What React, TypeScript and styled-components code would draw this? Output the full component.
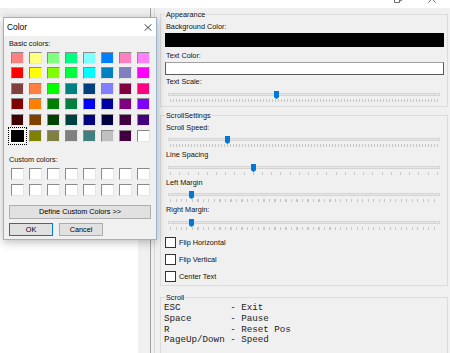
import React from "react";
import styled, { createGlobalStyle } from "styled-components";

const GlobalStyle = createGlobalStyle`
  html, body {
    margin: 0;
    padding: 0;
  }
  body {
    width: 450px;
    height: 353px;
    overflow: hidden;
    background: #f0f0f0;
    font-family: "Liberation Sans", Arial, sans-serif;
    color: #000;
  }
`;

const Screen = styled.div`
  position: relative;
  width: 450px;
  height: 353px;
  overflow: hidden;
  display: flex;
  flex-direction: column;
  background: #f0f0f0;
`;

const TopBar = styled.div`
  height: 8px;
  flex: none;
  background: #fff;
  display: flex;
  justify-content: flex-end;
  align-items: flex-start;
  gap: 26px;
  padding-right: 14px;
`;

const Main = styled.div`
  flex: 1;
  display: flex;
  min-height: 0;
`;

const LeftPane = styled.div`
  width: 138px;
  margin-top: 9px;
  background: #fff;
`;

const ScrollStrip = styled.div`
  width: 12px;
  background: #f0f0f0;
`;

const Splitter = styled.div`
  width: 3px;
  border-left: 1px solid #a0a0a0;
  border-right: 1px solid #dadada;
`;

const RightPane = styled.div`
  flex: 1;
  padding: 6px 2px 0 5px;
  display: flex;
  flex-direction: column;
`;

const GroupBox = styled.div<{ $mt?: number; $pad: string }>`
  position: relative;
  border: 1px solid #dcdcdc;
  margin-top: ${(p) => p.$mt ?? 0}px;
  padding: ${(p) => p.$pad};
  display: flex;
  flex-direction: column;
`;

const Legend = styled.span`
  position: absolute;
  top: -5px;
  left: 4px;
  padding: 0 1px;
  background: #f0f0f0;
  font-size: 7.3px;
  line-height: 9px;
  color: #111;
`;

const FieldLabel = styled.div<{ $mt?: number }>`
  font-size: 7.3px;
  line-height: 9px;
  padding-left: 1px;
  margin-top: ${(p) => p.$mt ?? 0}px;
  white-space: nowrap;
  color: #111;
`;

const ColorBar = styled.div<{ $color: string; $h: number }>`
  margin-top: 2.5px;
  height: ${(p) => p.$h}px;
  box-sizing: border-box;
  background: ${(p) => p.$color};
  border: 1px solid ${(p) => (p.$color === "#000" ? "#000" : "#5a5a5a")};
  border-top-color: ${(p) => (p.$color === "#000" ? "#000" : "#a0a0a0")};
`;

const SliderWrap = styled.div`
  position: relative;
  height: 14px;
  margin: 2.6px 4px 0 3px;
`;

const Track = styled.div`
  margin-top: 4px;
  height: 3px;
  box-sizing: border-box;
  background: #e7e7e7;
  border: 1px solid #d4d4d4;
`;

const Ticks = styled.div<{ $step: number }>`
  margin: 3px 2px 0;
  height: 3px;
  background: repeating-linear-gradient(
    to right,
    #c6c6c6 0 1px,
    transparent 1px ${(p) => p.$step}px
  );
`;

const Thumb = styled.svg`
  position: absolute;
  top: 2px;
  width: 5px;
  height: 8px;
  margin-left: -2.5px;
`;

const CheckRow = styled.div<{ $mt?: number }>`
  height: 17px;
  margin-top: ${(p) => p.$mt ?? 0}px;
  display: flex;
  align-items: center;
  gap: 3px;
  font-size: 7.3px;
  color: #111;
`;

const CheckBox = styled.span`
  width: 11px;
  height: 11px;
  box-sizing: border-box;
  background: #fff;
  border: 1px solid #333;
`;

const Mono = styled.pre`
  margin: 0;
  font-family: "Liberation Mono", "Courier New", monospace;
  font-size: 9.2px;
  line-height: 10.9px;
  color: #222;
`;

/* colour dialog */

const Dialog = styled.div`
  position: absolute;
  left: 3px;
  top: 17px;
  width: 154px;
  height: 223px;
  box-sizing: border-box;
  border: 1px solid #94b4d2;
  background: #f0f0f0;
  box-shadow: 0 2px 9px rgba(0, 0, 0, 0.28);
  display: flex;
  flex-direction: column;
`;

const TitleBar = styled.div`
  height: 18px;
  flex: none;
  background: #fff;
  display: flex;
  align-items: center;
  justify-content: space-between;
  padding: 0 4px 0 3px;
`;

const Title = styled.span`
  font-size: 8.4px;
`;

const DialogBody = styled.div`
  padding: 0 5px;
  display: flex;
  flex-direction: column;
`;

const DialogLabel = styled.div<{ $mt: number }>`
  margin-top: ${(p) => p.$mt}px;
  font-size: 7.3px;
  line-height: 9px;
  color: #111;
`;

const SwatchGrid = styled.div<{ $mt: number; $rowGap: number }>`
  margin: ${(p) => p.$mt}px 0 0 2px;
  display: grid;
  grid-template-columns: repeat(8, 13px);
  grid-auto-rows: 12px;
  column-gap: 5px;
  row-gap: ${(p) => p.$rowGap}px;
`;

const Swatch = styled.div<{ $color: string; $selected?: boolean }>`
  box-sizing: border-box;
  background: ${(p) => p.$color};
  border: 1px solid;
  border-color: #8a8a8a #e6e6e6 #e6e6e6 #8a8a8a;
  ${(p) =>
    p.$selected &&
    `
    border: 2px solid #000;
    box-shadow: 0 0 0 1px #fff;
    outline: 1px dotted #000;
    outline-offset: 2px;
  `}
`;

const WideButton = styled.div`
  margin-top: 9px;
  height: 14px;
  box-sizing: border-box;
  background: #e1e1e1;
  border: 1px solid #adadad;
  display: flex;
  align-items: center;
  justify-content: center;
  font-size: 7.3px;
`;

const ButtonRow = styled.div`
  margin-top: 4.3px;
  display: flex;
  gap: 6px;
`;

const Button = styled.div<{ $default?: boolean }>`
  width: 44px;
  height: 12.5px;
  box-sizing: border-box;
  background: #e1e1e1;
  border: 1px solid ${(p) => (p.$default ? "#0078d7" : "#adadad")};
  display: flex;
  align-items: center;
  justify-content: center;
  font-size: 7.3px;
`;

const basicColors = [
  "#FF8080", "#FFFF80", "#80FF80", "#00FF80", "#80FFFF", "#0080FF", "#FF80C0", "#FF80FF",
  "#FF0000", "#FFFF00", "#80FF00", "#00FF40", "#00FFFF", "#0080C0", "#8080C0", "#FF00FF",
  "#804040", "#FF8040", "#00FF00", "#008080", "#004080", "#8080FF", "#800040", "#FF0080",
  "#800000", "#FF8000", "#008000", "#008040", "#0000FF", "#0000A0", "#800080", "#8000FF",
  "#400000", "#804000", "#004000", "#004040", "#000080", "#000040", "#400040", "#400080",
  "#000000", "#808000", "#808040", "#808080", "#408080", "#C0C0C0", "#400040", "#FFFFFF",
];

const Slider = ({ value, step }: { value: number; step: number }) => (
  <SliderWrap>
    <Track />
    <Ticks $step={step} />
    <Thumb viewBox="0 0 5 8" style={{ left: `${value * 100}%` }}>
      <polygon points="0,0 5,0 5,6.2 2.5,8 0,6.2" fill="#0078d7" />
    </Thumb>
  </SliderWrap>
);

const keyHelp = [
  ["ESC", "Exit"],
  ["Space", "Pause"],
  ["R", "Reset Pos"],
  ["PageUp/Down", "Speed"],
];

const App = () => {
  return (
    <Screen>
      <GlobalStyle />
      <TopBar>
        <svg width="8" height="3" viewBox="0 0 8 3">
          <path d="M0.5 0 V2.5 H5.5 V0 M7.5 0 V0.7 H6" stroke="#444" fill="none" strokeWidth="0.8" />
        </svg>
        <svg width="8" height="3" viewBox="0 0 8 3">
          <path d="M2.8 0 L0.5 2.5 M5.2 0 L7.5 2.5" stroke="#444" fill="none" strokeWidth="0.8" />
        </svg>
      </TopBar>
      <Main>
        <LeftPane />
        <ScrollStrip />
        <Splitter />
        <RightPane>
          <GroupBox $pad="6.5px 3px 3.3px 4px">
            <Legend>Appearance</Legend>
            <FieldLabel>Background Color:</FieldLabel>
            <ColorBar $color="#000" $h={14} />
            <FieldLabel $mt={3.5}>Text Color:</FieldLabel>
            <ColorBar $color="#fff" $h={13} />
            <FieldLabel $mt={2}>Text Scale:</FieldLabel>
            <Slider value={0.4} step={3} />
          </GroupBox>
          <GroupBox $mt={8} $pad="7px 3px 0 4px">
            <Legend>ScrollSettings</Legend>
            <FieldLabel>Scroll Speed:</FieldLabel>
            <Slider value={0.217} step={3} />
            <FieldLabel $mt={1.8}>Line Spacing</FieldLabel>
            <Slider value={0.3125} step={9.2} />
            <FieldLabel $mt={1.8}>Left Margin</FieldLabel>
            <Slider value={0.088} step={5.5} />
            <FieldLabel $mt={1.8}>Right Margin:</FieldLabel>
            <Slider value={0.088} step={5.5} />
            <CheckRow $mt={3.1}>
              <CheckBox />
              Flip Horizontal
            </CheckRow>
            <CheckRow>
              <CheckBox />
              Flip Vertical
            </CheckRow>
            <CheckRow>
              <CheckBox />
              Center Text
            </CheckRow>
          </GroupBox>
          <GroupBox $mt={11.5} $pad="4.5px 3px 20px 3px">
            <Legend>Scroll</Legend>
            <Mono>
              {keyHelp.map(([k, v]) => `${k.padEnd(11, " ")} - ${v}`).join("\n")}
            </Mono>
          </GroupBox>
        </RightPane>
      </Main>

      <Dialog>
        <TitleBar>
          <Title>Color</Title>
          <svg width="8" height="7" viewBox="0 0 8 7">
            <path d="M0.5 0.3 L7.5 6.7 M7.5 0.3 L0.5 6.7" stroke="#111" strokeWidth="0.8" fill="none" />
          </svg>
        </TitleBar>
        <DialogBody>
          <DialogLabel $mt={3.2}>Basic colors:</DialogLabel>
          <SwatchGrid $mt={3.5} $rowGap={3.6}>
            {basicColors.map((c, i) => (
              <Swatch key={i} $color={c} $selected={i === 40} />
            ))}
          </SwatchGrid>
          <DialogLabel $mt={13.8}>Custom colors:</DialogLabel>
          <SwatchGrid $mt={3.8} $rowGap={3.7}>
            {Array.from({ length: 16 }).map((_, i) => (
              <Swatch key={i} $color="#fff" />
            ))}
          </SwatchGrid>
          <WideButton>Define Custom Colors &gt;&gt;</WideButton>
          <ButtonRow>
            <Button $default>OK</Button>
            <Button>Cancel</Button>
          </ButtonRow>
        </DialogBody>
      </Dialog>
    </Screen>
  );
};

export default App;
